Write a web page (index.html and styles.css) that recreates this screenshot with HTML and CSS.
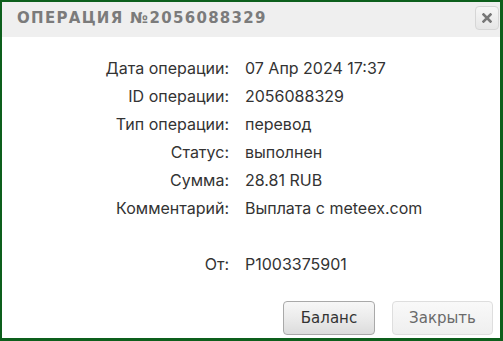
FILE: index.html
```html
<!DOCTYPE html>
<html lang="ru">
<head>
<meta charset="utf-8">
<link rel="stylesheet" href="styles.css">
</head>
<body>
<div class="dialog">
  <div class="header">
    <span class="title">ОПЕРАЦИЯ №2056088329</span>
    <button class="close" aria-label="close">
      <svg width="10" height="10" viewBox="0 0 10 10"><path d="M1.5 1.5 L8.5 8.5 M8.5 1.5 L1.5 8.5" stroke="#777" stroke-width="2.6" stroke-linecap="square"/></svg>
    </button>
  </div>
  <div class="body">
    <div class="row"><span class="label">Дата операции:</span><span class="value">07 Апр 2024 17:37</span></div>
    <div class="row"><span class="label">ID операции:</span><span class="value">2056088329</span></div>
    <div class="row"><span class="label">Тип операции:</span><span class="value">перевод</span></div>
    <div class="row"><span class="label">Статус:</span><span class="value">выполнен</span></div>
    <div class="row"><span class="label">Сумма:</span><span class="value">28.81 RUB</span></div>
    <div class="row"><span class="label">Комментарий:</span><span class="value">Выплата с meteex.com</span></div>
    <div class="row"><span class="label"></span><span class="value"></span></div>
    <div class="row"><span class="label">От:</span><span class="value">P1003375901</span></div>
  </div>
  <div class="footer">
    <button class="btn">Баланс</button>
    <button class="btn btn-light">Закрыть</button>
  </div>
</div>
</body>
</html>
```
FILE: styles.css
```css
html, body { margin: 0; padding: 0; background: #fff; }
.dialog {
  width: 503px; height: 341px; box-sizing: border-box;
  border: 2px solid #0d5f1c; border-right-width: 3px; border-bottom-width: 3px;
  background: #fff; display: flex; flex-direction: column;
  font-family: "Inter", "Open Sans", sans-serif;
}
.header {
  height: 35px; background: #efefef; display: flex; align-items: center;
  justify-content: space-between; padding: 0 1px 0 15px;
}
.title {
  font-family: "DejaVu Sans", sans-serif; font-weight: bold; font-size: 15px;
  letter-spacing: 1.3px; color: #7b7b7b; margin-top: -4px;
}
.close {
  width: 24px; height: 24px; margin-top: -4px; padding: 0; border: 1px solid #d6d6d6; border-radius: 4px;
  background: linear-gradient(#f6f6f6, #e6e6e6); display: flex; align-items: center; justify-content: center;
}
.body { padding-top: 17px; display: flex; flex-direction: column; }
.row { display: grid; grid-template-columns: 227px 1fr; column-gap: 16px; height: 28px; align-items: center; font-size: 16px; color: #333; }
.label { text-align: right; }
.footer { margin-top: auto; display: flex; justify-content: flex-end; gap: 17px; padding: 0 7px 3px 0; }
.btn {
  height: 34px; padding: 0 16px; min-width: 92px; border: 1px solid #a9a9a9; border-radius: 4px;
  background: linear-gradient(#f7f7f7 0%, #ebebeb 50%, #dcdcdc 100%);
  font-family: "DejaVu Sans", sans-serif; font-size: 15px; color: #333;
}
.btn-light { min-width: 101px; border-color: #dedede; background: linear-gradient(#f9f9f9, #efefef); color: #6a6a6a; }
```
